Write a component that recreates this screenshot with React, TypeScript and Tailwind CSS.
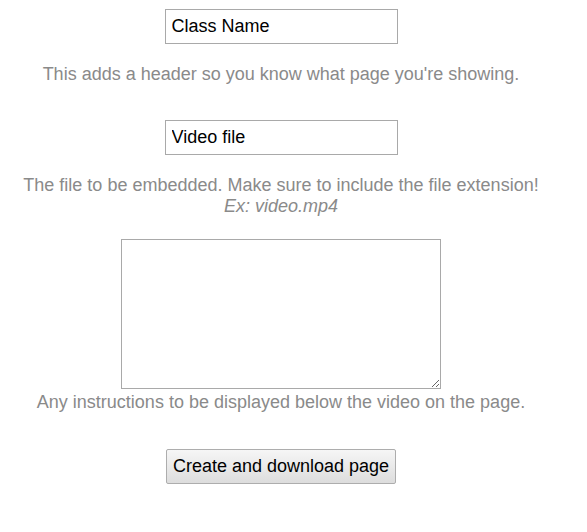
import React, { useState } from 'react';

const App: React.FC = () => {
  const [className, setClassName] = useState('Class Name');
  const [videoFile, setVideoFile] = useState('Video file');
  const [notes, setNotes] = useState('');

  const hint = 'text-[18px] leading-[21px] text-[#8a8a8a]';

  return (
    <div className="min-h-screen bg-white font-['Liberation_Sans',Arial,sans-serif]">
      <div className="w-[562px] flex flex-col items-center text-center">
        {/* Class name */}
        <input
          value={className}
          onChange={e => setClassName(e.target.value)}
          className="mt-[9px] w-[233px] h-[35px] border border-[#a9a9a9] px-[6px] text-[18px] text-black outline-none"
        />
        <p className={`mt-[20px] ${hint}`}>This adds a header so you know what page you're showing.</p>

        {/* Video file */}
        <input
          value={videoFile}
          onChange={e => setVideoFile(e.target.value)}
          className="mt-[35px] w-[233px] h-[35px] border border-[#a9a9a9] px-[6px] text-[18px] text-black outline-none"
        />
        <p className={`mt-[20px] ${hint}`}>
          The file to be embedded. Make sure to include the file extension!
          <br />
          <i>Ex: video.mp4</i>
        </p>

        {/* Instructions */}
        <textarea
          value={notes}
          onChange={e => setNotes(e.target.value)}
          className="mt-[22px] w-[320px] h-[150px] border border-[#a9a9a9] outline-none block"
        />
        <p className={`mt-[3px] ${hint}`}>Any instructions to be displayed below the video on the page.</p>

        <button className="mt-[36px] w-[230px] h-[35px] border border-[#adadad] rounded-[2px] bg-gradient-to-b from-[#f6f6f6] to-[#dddddd] text-[18px] text-black">
          Create and download page
        </button>
      </div>
    </div>
  );
};

export default App;
